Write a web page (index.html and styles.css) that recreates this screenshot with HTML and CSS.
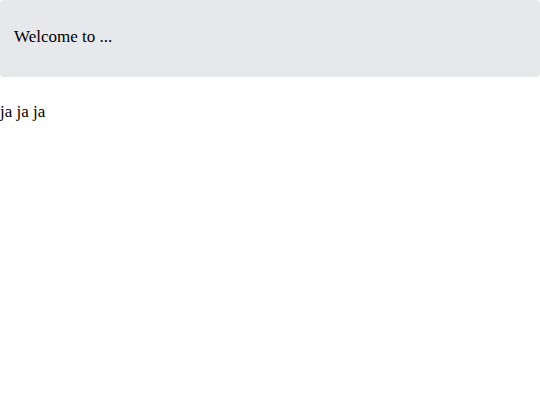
FILE: index.html
```html
<!DOCTYPE html>
<html>
<head>
<meta charset="utf-8">
<link rel="stylesheet" href="styles.css">
</head>
<body>
<div class="banner">Welcome to ...</div>
<p class="content">ja ja ja</p>
</body>
</html>
```
FILE: styles.css
```css
html, body {
  margin: 0;
  padding: 0;
  background: #ffffff;
}
body {
  font-family: "Liberation Serif", "Times New Roman", serif;
  font-size: 17px;
  color: #000000;
}
.banner {
  background: #e7e8eb;
  border-radius: 4px;
  height: 77px;
  box-sizing: border-box;
  padding: 27px 14px 0 14px;
}
.content {
  margin: 25px 0 0 0;
}
```
